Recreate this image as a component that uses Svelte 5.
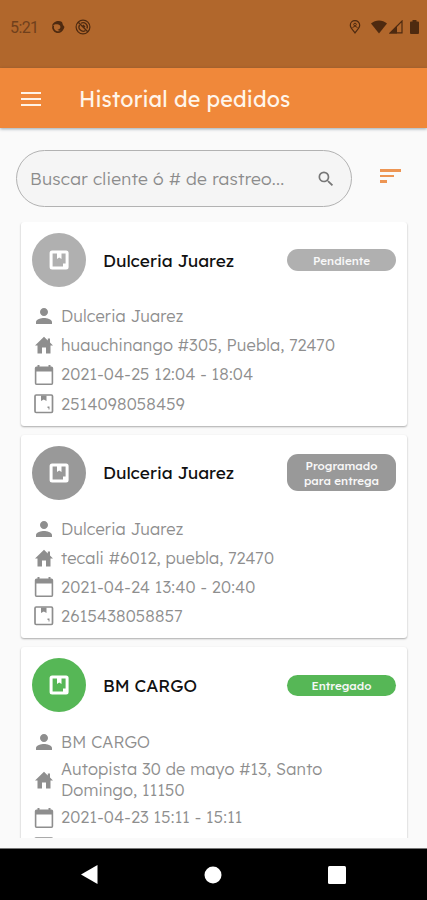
<script>
	let search = '';

	const orders = [
		{
			client: 'Dulceria Juarez',
			address: 'huauchinango #305, Puebla, 72470',
			date: '2021-04-25 12:04 - 18:04',
			tracking: '2514098058459',
			status: 'Pendiente',
			type: 'pending'
		},
		{
			client: 'Dulceria Juarez',
			address: 'tecali #6012, puebla, 72470',
			date: '2021-04-24 13:40 - 20:40',
			tracking: '2615438058857',
			status: 'Programado para entrega',
			type: 'scheduled'
		},
		{
			client: 'BM CARGO',
			address: 'Autopista 30 de mayo #13, Santo Domingo, 11150',
			date: '2021-04-23 15:11 - 15:11',
			tracking: '',
			status: 'Entregado',
			type: 'delivered'
		}
	];
</script>

<div class="screen">
	<div class="status-bar">
		<span class="clock">5:21</span>
		<svg class="notice" width="14" height="14" viewBox="0 0 14 14">
			<path d="M2.300 5.500a5 5 0 1 0 9.700 2" fill="none" stroke="currentColor" stroke-width="1.700" />
			<path d="M1 6C2 1 8 0 11 2l1 3 1.500 2c-1 3.500-5 5-7 2.500 2.500 0 3.500-2 2.500-4C7 3.500 3 4 1 6z" fill="currentColor" />
		</svg>
		<svg class="notice second" width="16" height="16" viewBox="0 0 16 16" fill="none" stroke="currentColor">
			<circle cx="8" cy="8" r="6.9" stroke-width="1.2" />
			<path d="M4.500 6a4.200 4.200 0 0 0 6 5.500M6 4.300a4.200 4.200 0 0 1 6 5.200" stroke-width="1.300" />
			<path d="M3 3l10 10M8 6l2 2" stroke-width="1.400" />
		</svg>
		<div class="system">
			<svg class="pin" width="12" height="14" viewBox="0 0 12 14" fill="none" stroke="currentColor">
				<path d="M6 13C4 10.300 1.300 7.600 1.300 5.200a4.700 4.500 0 0 1 9.400 0C10.700 7.600 8 10.300 6 13z" stroke-width="1.200" />
				<circle cx="6" cy="4.500" r="1.300" />
				<path d="M3.500 8c.7-2 4.300-2 5 0" />
			</svg>
			<svg class="wifi" width="16" height="14" viewBox="0 0 16 14">
				<path d="M0 3.500C4.500-.6 11.500-.6 16 3.500L8 13.500z" fill="currentColor" />
			</svg>
			<svg class="signal" width="14" height="14" viewBox="0 0 14 14">
				<path d="M1.300 12.800L13 1v11.800z" fill="none" stroke="currentColor" stroke-width="1.200" />
				<path d="M0 13.500l8-8v8z" fill="currentColor" />
			</svg>
			<svg class="battery" width="9" height="14" viewBox="0 0 9 14">
				<path d="M2.500 0h4v1.500H8a1 1 0 0 1 1 1V13a1 1 0 0 1-1 1H1a1 1 0 0 1-1-1V2.500a1 1 0 0 1 1-1h1.500z" fill="currentColor" />
			</svg>
		</div>
	</div>

	<header class="header">
		<button class="menu" aria-label="Menu">
			<span></span>
			<span></span>
			<span></span>
		</button>
		<h1>Historial de pedidos</h1>
	</header>

	<div class="toolbar">
		<label class="search">
			<input type="text" placeholder="Buscar cliente ó # de rastreo..." bind:value={search} />
			<svg width="20" height="20" viewBox="0 0 24 24">
				<path
					d="M15.500 14h-.79l-.28-.27A6.471 6.471 0 0 0 16 9.500 6.500 6.500 0 1 0 9.500 16c1.610 0 3.090-.59 4.230-1.570l.27.28v.79l5 4.990L20.490 19l-4.990-5zm-6 0C7.010 14 5 11.990 5 9.500S7.010 5 9.500 5 14 7.010 14 9.500 11.990 14 9.500 14z"
					fill="currentColor"
				/>
			</svg>
		</label>
		<button class="sort" aria-label="Ordenar">
			<span></span>
			<span></span>
			<span></span>
		</button>
	</div>

	<main class="orders">
		{#each orders as order}
			<article class="card {order.type}">
				<div class="card-header">
					<div class="avatar">
						<svg width="20" height="20" viewBox="0 0 20 20">
							<rect x="2.100" y="2.100" width="16" height="16" rx="1" fill="none" stroke="#fff" stroke-width="3" />
							<path d="M8 2h4.500v7L10.200 7.500 8 9z" fill="#fff" />
							<path d="M14 13.500h3V17h-3z" fill="#fff" />
						</svg>
					</div>
					<h2>{order.client}</h2>
					<span class="badge">{order.status}</span>
				</div>
				<div class="row">
					<svg width="24" height="24" viewBox="0 0 24 24">
						<path d="M12 12c2.210 0 4-1.790 4-4s-1.790-4-4-4-4 1.790-4 4 1.790 4 4 4zm0 2c-2.670 0-8 1.340-8 4v2h16v-2c0-2.660-5.330-4-8-4z" />
					</svg>
					<span>{order.client}</span>
				</div>
				<div class="row">
					<svg width="24" height="24" viewBox="0 0 24 24">
						<path d="M10 20.500v-6h4v6h4.500v-8H21L18 9.600V5.500h-2.200v2L12 3.800 3 12.500h2.500v8z" />
					</svg>
					<span>{order.address}</span>
				</div>
				<div class="row">
					<svg width="24" height="24" viewBox="0 0 24 24">
						<path
							d="M19.500 3.500h-1V2h-2v1.500h-9V2h-2v1.500h-1A1.700 1.700 0 0 0 2.800 5.200v15A1.700 1.700 0 0 0 4.500 22h15a1.700 1.700 0 0 0 1.700-1.800v-15a1.700 1.700 0 0 0-1.700-1.700zm.1 16.900H4.400V8.500h15.200z"
						/>
					</svg>
					<span>{order.date}</span>
				</div>
				<div class="row">
					<svg width="24" height="24" viewBox="0 0 24 24">
						<rect x="3" y="3" width="17.500" height="17.500" rx="1.200" fill="none" stroke="currentColor" stroke-width="1.700" />
						<path d="M9 3.500h5.500V9l-2.700-1.500L9 9zM15.500 14.500h2v3h-1v-1.500h-1z" />
					</svg>
					<span>{order.tracking}</span>
				</div>
			</article>
		{/each}
	</main>

	<nav class="nav-bar">
		<svg width="17" height="19" viewBox="0 0 17 19"><path d="M0 9.500L16.500 0v19z" fill="#fff" /></svg>
		<svg width="18" height="18" viewBox="0 0 18 18"><circle cx="9" cy="9" r="8.500" fill="#fff" /></svg>
		<svg width="18" height="18" viewBox="0 0 18 18"><rect width="18" height="18" rx="1.500" fill="#fff" /></svg>
	</nav>
</div>

<style>
	:global(body) {
		background: #fafafa;
	}

	.screen {
		width: 427px;
		height: 900px;
		display: flex;
		flex-direction: column;
		overflow: hidden;
		background: #fafafa;
		font-family: Lexend, Lato, sans-serif;
	}

	.screen * {
		box-sizing: border-box;
	}

	svg {
		display: block;
		flex-shrink: 0;
	}

	button {
		border: none;
		background: none;
		padding: 0;
	}

	.status-bar {
		height: 68px;
		flex-shrink: 0;
		background: #b1672c;
		color: #4e2a10;
		display: flex;
		align-items: flex-start;
		padding: 19px 7px 0 10px;
	}

	.clock {
		font-family: Roboto, sans-serif;
		font-size: 16px;
		line-height: 18px;
		width: 41px;
		letter-spacing: -0.6px;
		color: #70401c;
	}

	.notice {
		margin-top: 1px;
	}

	.notice.second {
		margin: 0 0 0 10px;
	}

	.system {
		display: flex;
		margin: 1px 0 0 auto;
	}

	.wifi {
		margin-left: 10px;
	}

	.signal {
		margin-left: 2px;
	}

	.battery {
		margin: 0 1px 0 7px;
	}

	.header {
		height: 60px;
		flex-shrink: 0;
		background: #f0883a;
		display: flex;
		align-items: center;
		padding-left: 21px;
		box-shadow: 0 1px 3px rgba(0, 40, 60, 0.4);
	}

	.menu {
		width: 20px;
		margin-top: 1px;
		display: flex;
		flex-direction: column;
		gap: 4px;
	}

	.menu span {
		height: 2px;
		background: #fff2e5;
	}

	h1 {
		margin: 1px 0 0 38px;
		font-size: 21.5px;
		font-weight: 400;
		letter-spacing: 0.13px;
		color: #fff5ea;
	}

	.toolbar {
		display: flex;
		align-items: flex-start;
		padding: 22px 26px 0 16px;
		height: 94px;
		flex-shrink: 0;
	}

	.search {
		width: 336px;
		height: 57px;
		display: flex;
		align-items: center;
		padding: 0 15px 0 13px;
		border: 1px solid #b2b2b2;
		border-radius: 29px;
		background: #f5f5f5;
		color: #777;
	}

	.search input {
		flex: 1;
		min-width: 0;
		padding: 0;
		border: none;
		outline: none;
		background: none;
		font-family: inherit;
		font-size: 17.4px;
		font-weight: 300;
		letter-spacing: 0.22px;
	}

	.search input::placeholder {
		color: #8c8c8c;
		opacity: 1;
	}

	.sort {
		width: 21px;
		margin: 19px 0 0 28px;
		display: flex;
		flex-direction: column;
		gap: 3px;
	}

	.sort span {
		height: 2.6px;
		background: #ed9553;
	}

	.sort span:nth-child(2) {
		width: 14px;
	}

	.sort span:nth-child(3) {
		width: 7px;
	}

	.orders {
		height: 616px;
		flex-shrink: 0;
		overflow: hidden;
		padding: 0 20px 0 21px;
		display: flex;
		flex-direction: column;
		gap: 9.2px;
	}

	.card {
		flex-shrink: 0;
		padding: 11px 11px 7.2px;
		background: #fff;
		border-radius: 3px;
		box-shadow: 0 1px 2px rgba(0, 0, 0, 0.32);
	}

	.card-header {
		height: 54px;
		margin-bottom: 14.6px;
		display: flex;
		align-items: center;
	}

	.avatar {
		width: 54px;
		height: 54px;
		flex-shrink: 0;
		display: flex;
		align-items: center;
		justify-content: center;
		border-radius: 50%;
	}

	h2 {
		flex: 1;
		margin: 0 0 0 17px;
		font-size: 17.3px;
		font-weight: 400;
		color: #111;
	}

	.badge {
		width: 109px;
		padding: 3.5px 12px 2.5px;
		border-radius: 11px;
		font-size: 11.6px;
		line-height: 15.5px;
		font-weight: 500;
		text-align: center;
		color: #f8f8f8;
	}

	.pending .avatar,
	.pending .badge {
		background: #b0b0b0;
	}

	.scheduled .avatar,
	.scheduled .badge {
		background: #999;
	}

	.delivered .avatar,
	.delivered .badge {
		background: #56b756;
	}

	.row {
		min-height: 29.2px;
		padding: 3.2px 0;
		display: flex;
		align-items: center;
		color: #8e8e8e;
		font-size: 16.4px;
		font-weight: 300;
		letter-spacing: 0.16px;
		line-height: 20.2px;
	}

	.row svg {
		fill: currentColor;
		margin: -2px 5px -2px 0;
	}

	.row span {
		max-width: 300px;
	}

	.nav-bar {
		height: 52px;
		margin-top: auto;
		flex-shrink: 0;
		background: #000;
		display: flex;
		align-items: center;
		justify-content: space-between;
		padding: 0 81px 0 81px;
		border-top: 1px solid #777;
	}
</style>
